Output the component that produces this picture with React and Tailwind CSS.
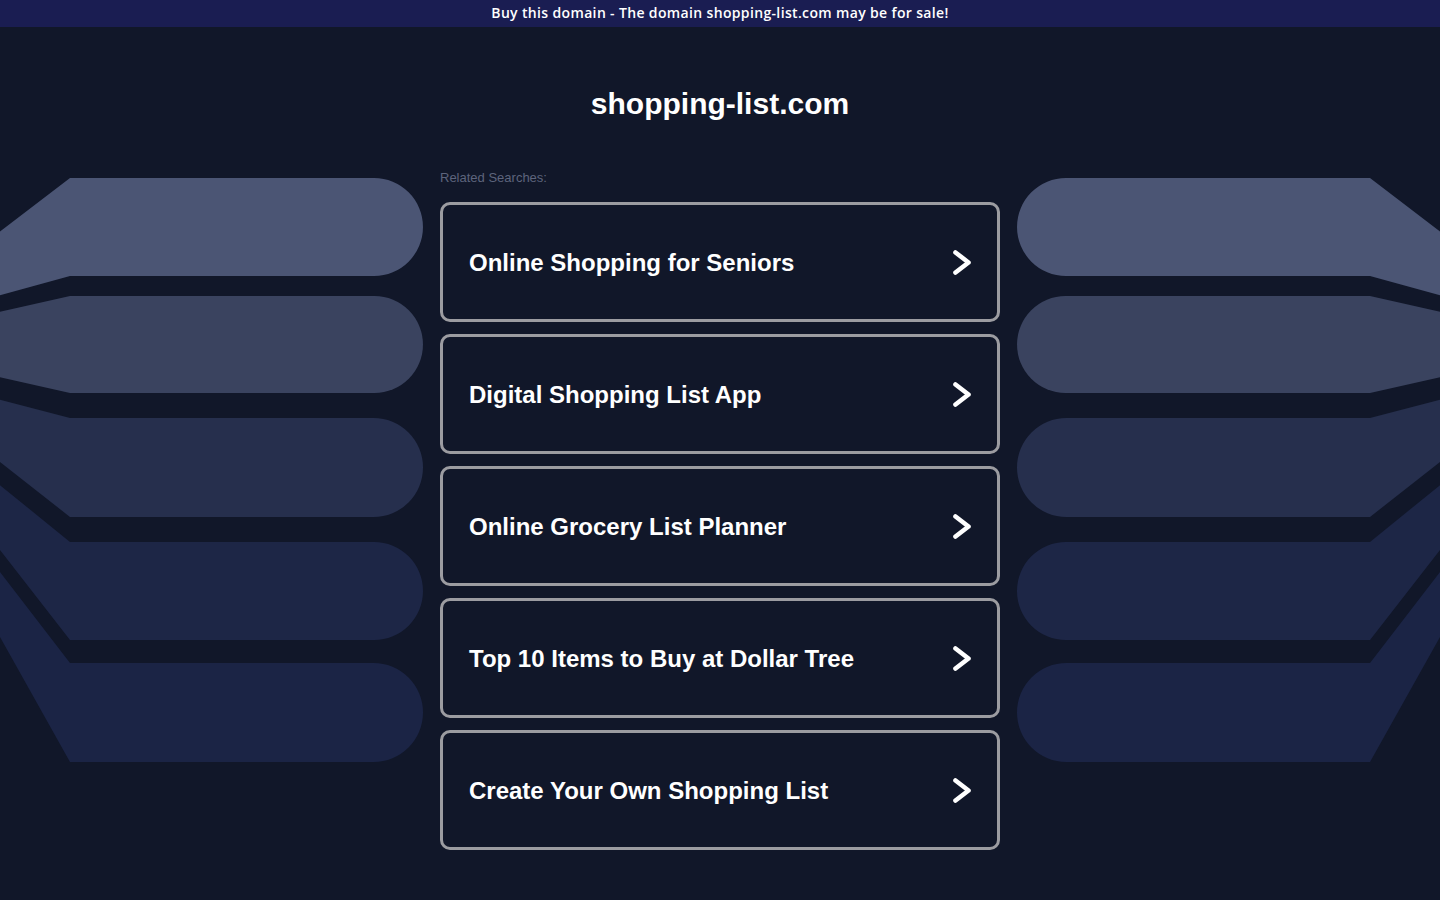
const searches = [
	"Online Shopping for Seniors",
	"Digital Shopping List App",
	"Online Grocery List Planner",
	"Top 10 Items to Buy at Dollar Tree",
	"Create Your Own Shopping List",
];

// left-hand fan of bars, page coordinates (y offset 170 handled by viewBox)
const bars = [
	{ d: "M70 178 H374 A49 49 0 0 1 374 276 H70 L-10 298 L-10 239 Z", fill: "#4b5574" },
	{ d: "M70 296 H374.5 A48.5 48.5 0 0 1 374.5 393 H70 L-10 375 L-10 314 Z", fill: "#3a435f" },
	{ d: "M70 418 H373.5 A49.5 49.5 0 0 1 373.5 517 H70 L-10 454 L-10 397 Z", fill: "#262f4d" },
	{ d: "M70 542 H374 A49 49 0 0 1 374 640 H70 L-10 537 L-10 477 Z", fill: "#1d2646" },
	{ d: "M70 663 H373.5 A49.5 49.5 0 0 1 373.5 762 H70 L-10 619 L-10 559 Z", fill: "#1b2445" },
];

function Fan({ flip }) {
	return (
		<svg width="440" height="600" viewBox="0 170 440 600" className="block">
			<g transform={flip ? "translate(440,0) scale(-1,1)" : undefined}>
				{bars.map((b, i) => (
					<path key={i} d={b.d} fill={b.fill} />
				))}
			</g>
		</svg>
	);
}

function Chevron() {
	return (
		<svg width="18" height="25" viewBox="0 0 18 25" className="shrink-0">
			<polyline
				points="2.5,2.5 15.5,12.5 2.5,22.5"
				fill="none"
				stroke="white"
				strokeWidth="4.6"
				strokeLinecap="round"
				strokeLinejoin="round"
			/>
		</svg>
	);
}

export default function App() {
	return (
		<div className="min-h-screen bg-[#111729] font-['Liberation_Sans',Arial,sans-serif] text-white">
			<div className="h-[27px] bg-[#1a1d52] flex items-center justify-center pb-[2px]">
				<span className="font-['Open_Sans',sans-serif] font-semibold text-[14px] tracking-[0.35px]">
					Buy this domain - The domain shopping-list.com may be for sale!
				</span>
			</div>

			<h1 className="mt-[59px] text-center text-[30px] leading-[36px] font-bold">
				shopping-list.com
			</h1>

			<div className="mt-[48px] flex">
				<div className="w-[440px] shrink-0">
					<Fan />
				</div>

				<div className="w-[560px] shrink-0">
					<p className="text-[13px] leading-[15px] text-[#5d647c]">Related Searches:</p>
					<div className="mt-[17px] flex flex-col gap-[12px]">
						{searches.map((s) => (
							<a
								key={s}
								href="#"
								className="h-[120px] flex items-center justify-between rounded-[10px] border-[3px] border-[#9c9ca1] pl-[26px] pr-[26px] pt-[1px]"
							>
								<span className="text-[24px] font-bold">{s}</span>
								<Chevron />
							</a>
						))}
					</div>
				</div>

				<div className="w-[440px] shrink-0">
					<Fan flip />
				</div>
			</div>
		</div>
	);
}
